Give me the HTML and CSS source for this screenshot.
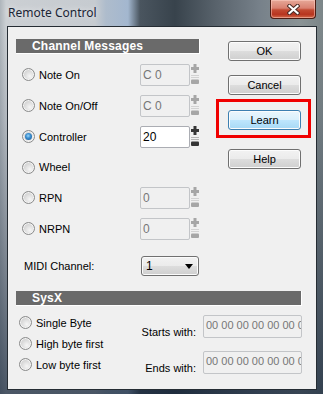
FILE: index.html
```html
<!DOCTYPE html>
<html>
<head>
    <link rel="stylesheet" href="styles.css">
</head>
<body>
    <div class="titlebar">
        <span class="title">Remote Control</span>
        <div class="close-btn">
            <svg width="13" height="11" viewBox="0 0 13 11">
                <path d="M2.5 2L10.5 9M10.5 2L2.5 9" stroke="#4a2a24" stroke-width="4.2" stroke-linecap="square"/>
                <path d="M2.5 2L10.5 9M10.5 2L2.5 9" stroke="#ffffff" stroke-width="2.2" stroke-linecap="square"/>
            </svg>
        </div>
    </div>

    <div class="client">
        <div class="top">
            <div class="channels">
                <div class="group-bar">Channel Messages</div>

                <div class="option-row">
                    <label class="radio-label"><span class="radio"></span>Note On</label>
                    <div class="spin-field disabled">
                        <div class="field">C 0</div>
                        <svg class="spinner" width="8" height="22" viewBox="0 0 8 22">
                            <path class="glyph" d="M2.5 0h3v3h2.5v3h-2.5v3h-3v-3H0V3h2.5z"/>
                            <rect class="line" y="11" width="8" height="1"/>
                            <rect class="line" y="13" width="8" height="1"/>
                            <rect class="glyph" y="15.5" width="8" height="4.5" rx="1"/>
                        </svg>
                    </div>
                </div>

                <div class="option-row">
                    <label class="radio-label"><span class="radio"></span>Note On/Off</label>
                    <div class="spin-field disabled">
                        <div class="field">C 0</div>
                        <svg class="spinner" width="8" height="22" viewBox="0 0 8 22">
                            <path class="glyph" d="M2.5 0h3v3h2.5v3h-2.5v3h-3v-3H0V3h2.5z"/>
                            <rect class="line" y="11" width="8" height="1"/>
                            <rect class="line" y="13" width="8" height="1"/>
                            <rect class="glyph" y="15.5" width="8" height="4.5" rx="1"/>
                        </svg>
                    </div>
                </div>

                <div class="option-row">
                    <label class="radio-label"><span class="radio checked"></span>Controller</label>
                    <div class="spin-field">
                        <div class="field">20</div>
                        <svg class="spinner" width="8" height="22" viewBox="0 0 8 22">
                            <path class="glyph" d="M2.5 0h3v3h2.5v3h-2.5v3h-3v-3H0V3h2.5z"/>
                            <rect class="line" y="11" width="8" height="1"/>
                            <rect class="line" y="13" width="8" height="1"/>
                            <rect class="glyph" y="15.5" width="8" height="4.5" rx="1"/>
                        </svg>
                    </div>
                </div>

                <div class="option-row short">
                    <label class="radio-label"><span class="radio"></span>Wheel</label>
                </div>

                <div class="option-row">
                    <label class="radio-label"><span class="radio"></span>RPN</label>
                    <div class="spin-field disabled">
                        <div class="field">0</div>
                        <svg class="spinner" width="8" height="22" viewBox="0 0 8 22">
                            <path class="glyph" d="M2.5 0h3v3h2.5v3h-2.5v3h-3v-3H0V3h2.5z"/>
                            <rect class="line" y="11" width="8" height="1"/>
                            <rect class="line" y="13" width="8" height="1"/>
                            <rect class="glyph" y="15.5" width="8" height="4.5" rx="1"/>
                        </svg>
                    </div>
                </div>

                <div class="option-row">
                    <label class="radio-label"><span class="radio"></span>NRPN</label>
                    <div class="spin-field disabled">
                        <div class="field">0</div>
                        <svg class="spinner" width="8" height="22" viewBox="0 0 8 22">
                            <path class="glyph" d="M2.5 0h3v3h2.5v3h-2.5v3h-3v-3H0V3h2.5z"/>
                            <rect class="line" y="11" width="8" height="1"/>
                            <rect class="line" y="13" width="8" height="1"/>
                            <rect class="glyph" y="15.5" width="8" height="4.5" rx="1"/>
                        </svg>
                    </div>
                </div>

                <div class="midi-row">
                    <span>MIDI Channel:</span>
                    <div class="dropdown">
                        <span>1</span>
                        <svg class="arrow" width="8" height="5" viewBox="0 0 8 5"><path d="M0 0h8L4 5z" fill="#000"/></svg>
                    </div>
                </div>
            </div>

            <div class="actions">
                <button class="btn">OK</button>
                <button class="btn">Cancel</button>
                <button class="btn learn">Learn</button>
                <button class="btn help">Help</button>
            </div>
        </div>

        <div class="sysx">
            <div class="group-bar wide">SysX</div>
            <div class="sysx-body">
                <div class="byte-options">
                    <label class="radio-label"><span class="radio"></span>Single Byte</label>
                    <label class="radio-label"><span class="radio"></span>High byte first</label>
                    <label class="radio-label"><span class="radio"></span>Low byte first</label>
                </div>
                <div class="sysx-fields">
                    <span class="field-label">Starts with:</span>
                    <div class="field hex">00 00 00 00 00 00 00</div>
                    <span class="field-label">Ends with:</span>
                    <div class="field hex">00 00 00 00 00 00 00</div>
                </div>
            </div>
        </div>
    </div>
</body>
</html>
```

FILE: styles.css
```css
* {
    margin: 0;
    padding: 0;
    box-sizing: border-box;
}

body {
    width: 323px;
    height: 394px;
    overflow: hidden;
    font-family: 'Liberation Sans', Arial, sans-serif;
    font-size: 11px;
    color: #000;
    background:
        linear-gradient(to bottom, rgba(0, 0, 0, 0) 0, rgba(0, 0, 0, 0) 26px, rgba(40, 55, 75, 0.15) 120px, rgba(20, 35, 55, 0.7) 394px),
        linear-gradient(to right, #aeb5bb 0, #cbcfd3 6px, #c6cbd0 95px, #aebccc 106px, #a3b7cf 128px, #4a555f 140px, #38434c 175px, #58626b 215px, #77818a 260px, #8a9395 300px, #7c8689 323px);
}

/* Title bar */
.titlebar {
    height: 26px;
    display: flex;
    justify-content: space-between;
    align-items: flex-start;
}

.title {
    font-family: 'Noto Sans', 'Open Sans', sans-serif;
    font-size: 12px;
    line-height: 16px;
    color: #1b2536;
    padding: 5px 0 0 8px;
    text-shadow: 0 0 6px rgba(255, 255, 255, 0.8);
}

.close-btn {
    width: 46px;
    height: 19px;
    margin-right: 7px;
    border: 1px solid #4d1d14;
    border-top: none;
    border-radius: 0 0 4px 4px;
    background: linear-gradient(to bottom, #e6a898 0, #d98070 45%, #c24a32 55%, #b8351f 80%, #d26a4a 100%);
    box-shadow: inset 0 0 0 1px rgba(255, 210, 200, 0.5);
    display: flex;
    justify-content: center;
    align-items: center;
}

/* Client area */
.client {
    margin-left: 7px;
    width: 310px;
    height: 364px;
    background-color: #f0f0f0;
    border: 1px solid #252c33;
}

.top {
    display: flex;
}

.channels {
    width: 184px;
    margin-left: 8px;
    padding-top: 12px;
}

.group-bar {
    height: 15px;
    background-color: #6a6a6a;
    border-right: 1px solid #fff;
    border-bottom: 1px solid #fff;
    color: #fff;
    font-weight: bold;
    font-size: 12px;
    line-height: 14px;
    padding-left: 16px;
    letter-spacing: 0.2px;
}

.group-bar.wide {
    width: 286px;
    margin-left: 8px;
}

.channels .group-bar {
    margin-bottom: 5px;
}

.option-row {
    height: 31px;
    display: flex;
    align-items: center;
}

.option-row.short {
    height: 30px;
}

.radio-label {
    width: 124px;
    display: flex;
    align-items: center;
    padding-left: 6px;
}

.radio {
    width: 13px;
    height: 13px;
    border-radius: 50%;
    border: 1px solid #8a8b8b;
    background: radial-gradient(circle at 62% 66%, #f6f6f6 0, #dedede 45%, #c2c2c2 100%);
    box-shadow: inset 0 0 0 1px #f4f4f4;
    margin-right: 4px;
    display: inline-flex;
    justify-content: center;
    align-items: center;
    flex-shrink: 0;
}

.radio.checked::after {
    content: '';
    width: 7px;
    height: 7px;
    border-radius: 50%;
    background: radial-gradient(circle at 45% 40%, #9ad8fb 0, #3d8fd0 40%, #124f8c 100%);
}

.spin-field {
    display: flex;
    align-items: center;
}

.field {
    width: 50px;
    height: 22px;
    border: 1px solid #abadb3;
    border-radius: 2px;
    background-color: #fff;
    padding-left: 2px;
    display: flex;
    align-items: center;
    font-size: 12px;
    overflow: hidden;
    white-space: nowrap;
}

.disabled .field {
    background-color: #f0f0f0;
    border-color: #c3c5c8;
    color: #777;
}

.spinner {
    margin-left: 1px;
}

.spinner .glyph {
    fill: #353535;
}

.spinner .line {
    fill: #b4b4b4;
}

.disabled .spinner .glyph {
    fill: #a6a6a6;
}

.disabled .spinner .line {
    fill: #d2d2d2;
}

.midi-row {
    margin-top: 12px;
    height: 20px;
    display: flex;
    align-items: center;
    padding-left: 8px;
}

.midi-row span:first-child {
    width: 117px;
}

.dropdown {
    width: 58px;
    height: 20px;
    border: 1px solid #707070;
    border-radius: 3px;
    background: linear-gradient(to bottom, #f2f2f2 0, #ebebeb 50%, #dddddd 51%, #cfcfcf 100%);
    box-shadow: inset 0 0 0 1px #fbfbfb;
    display: flex;
    justify-content: space-between;
    align-items: center;
    padding: 0 5px 0 4px;
    font-size: 12px;
}

.dropdown .arrow {
    flex-shrink: 0;
    display: block;
}

/* Buttons */
.actions {
    display: flex;
    flex-direction: column;
    margin-left: 28px;
    padding-top: 14px;
}

.btn {
    width: 73px;
    height: 20px;
    font-family: 'Liberation Sans', Arial, sans-serif;
    font-size: 11px;
    color: #000;
    border: 1px solid #707070;
    border-radius: 3px;
    background: linear-gradient(to bottom, #f2f2f2 0, #ebebeb 50%, #dddddd 51%, #cfcfcf 100%);
    box-shadow: inset 0 0 0 1px #fcfcfc;
    margin-bottom: 14px;
}

.btn.learn {
    position: relative;
    margin-top: 1px;
    margin-bottom: 19px;
    border-color: #3c7fb1;
    background: linear-gradient(to bottom, #eaf6fd 0, #d9f0fc 50%, #bee6fd 51%, #a7d9f5 100%);
}

/* red highlight drawn over the dialog */
.btn.learn::after {
    content: '';
    position: absolute;
    left: -13px;
    right: -11px;
    top: -12px;
    bottom: -9px;
    border: 3px solid #f00000;
}

/* SysX section */
.sysx {
    margin-top: 15px;
}

.sysx-body {
    display: flex;
    justify-content: space-between;
}

.byte-options {
    display: flex;
    flex-direction: column;
    margin-top: 6px;
    padding-left: 5px;
}

.byte-options .radio-label {
    height: 21px;
    width: auto;
}

.sysx-fields {
    display: grid;
    grid-template-columns: auto 99px;
    column-gap: 7px;
    row-gap: 12px;
    margin-top: 9px;
    margin-right: 14px;
}

.field-label {
    align-self: end;
    text-align: right;
    line-height: 14px;
}

.field.hex {
    width: 99px;
    height: 23px;
    background-color: #f0f0f0;
    border-color: #c3c5c8;
    color: #777;
    align-items: flex-start;
    padding-top: 3px;
    font-size: 11px;
}
```
